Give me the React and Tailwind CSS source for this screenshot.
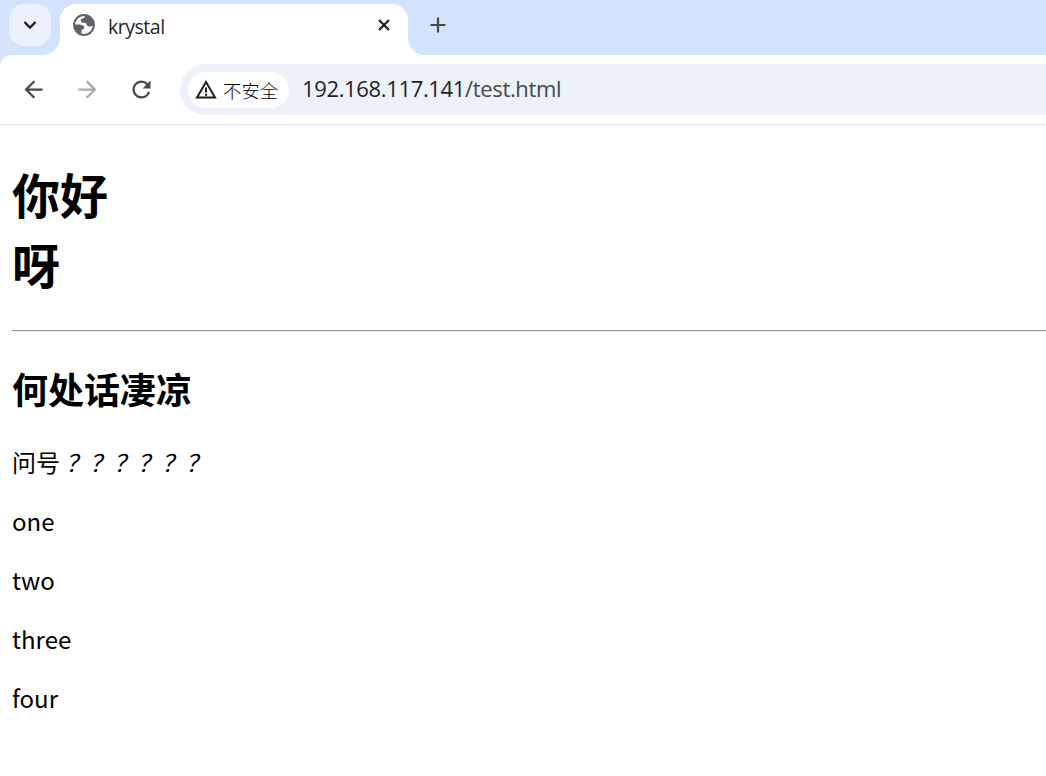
import { MdArrowBack, MdArrowForward, MdRefresh } from "react-icons/md";

const items = ["one", "two", "three", "four"];

function GlobeIcon() {
  return (
    <svg viewBox="0 0 24 24" className="mb-[2px] h-6 w-6">
      <circle cx="12" cy="12" r="9.9" fill="#fff" stroke="#5f6368" strokeWidth="2" />
      <path
        d="M13 2C13 4.4 12 5.2 10.4 5.6C8.8 6 8.4 7.4 9 8.8C9.6 10 11.4 9.6 13 9.8C14.6 10 14 12 15.6 13C17 13.8 19.6 13.4 22 12.4A10 10 0 0 0 13 2Z"
        fill="#5f6368"
      />
      <path
        d="M2 11.4H7.4C9.6 11.4 12 12.4 12.4 14.4C12.6 15.8 11.4 16.2 10 16.4C9.4 17.4 9.8 18.4 9.4 21.4A10 10 0 0 1 2 11.4Z"
        fill="#5f6368"
      />
    </svg>
  );
}

function TabStrip() {
  return (
    <div className="flex h-[55px] bg-[#d3e3fd]">
      <div className="flex w-[60px] flex-col justify-between">
        <button className="ml-[9px] mt-1 flex h-[42px] w-[42px] items-center justify-center rounded-[15px] bg-[#ebf2fe]">
          <svg viewBox="0 0 14 10" className="h-[10px] w-[14px]" fill="none" stroke="#1f1f1f" strokeWidth="2.3">
            <path d="M1.5 2L7 7.5L12.5 2" />
          </svg>
        </button>
        {/* curved foot joining the tab to the toolbar */}
        <svg viewBox="0 0 18 18" className="-mt-[9px] ml-[42px] h-[18px] w-[18px]">
          <path d="M18 0A18 18 0 0 1 0 18H18Z" fill="#fff" />
        </svg>
      </div>
      <div className="mt-1 flex w-[348px] items-center rounded-t-[16px] bg-white pb-2 pl-3 pr-[18px]">
        <GlobeIcon />
        <span className="ml-3 mt-[2px] grow text-[19.5px] leading-6 tracking-[-0.48px] text-[#1f1f1f]">krystal</span>
        <svg viewBox="0 0 12 12" className="mb-[2px] h-3 w-3" stroke="#1f1f1f" strokeWidth="2.2">
          <path d="M1 1L11 11M11 1L1 11" />
        </svg>
      </div>
      <svg viewBox="0 0 16 18" className="h-[18px] w-4 self-end">
        <path d="M0 0A16 18 0 0 0 16 18H0Z" fill="#fff" />
      </svg>
      <svg viewBox="0 0 16 16" className="ml-[6px] mt-[17px] h-4 w-4" stroke="#474747" strokeWidth="2.2">
        <path d="M8 0.5V15.5M0.5 8H15.5" />
      </svg>
    </div>
  );
}

function Toolbar() {
  return (
    <div className="bg-[#d3e3fd]">
      <div className="flex h-[70px] items-center rounded-tl-[12px] border-b border-[#dfe1e5] bg-white pl-[19.5px]">
        <MdArrowBack className="h-[27px] w-[27px] text-[#474747]" />
        <MdArrowForward className="ml-[27px] h-[27px] w-[27px] text-[#a8a8a8]" />
        <MdRefresh className="ml-[27px] h-[27px] w-[27px] text-[#474747]" />
        <div className="ml-[25.5px] flex h-[51px] grow items-center rounded-l-full bg-[#ecf1fa] pl-2">
          <div className="flex h-9 w-[101px] items-center rounded-full bg-white pl-[7px]">
            <svg viewBox="0 0 22 19" className="h-[19px] w-[22px]" fill="none" stroke="#1f1f1f" strokeWidth="2">
              <path d="M11 2L20 17.5H2Z" />
              <path d="M11 7.5V12.5M11 13.8V15.8" />
            </svg>
            <span className="ml-[6px] text-[18.4px] font-light leading-6 text-black [font-family:'Noto_Sans_CJK_SC',sans-serif]">
              不安全
            </span>
          </div>
          <span className="mb-1 ml-[13px] text-[22px] leading-8 tracking-[-0.35px] text-[#1f1f1f]">
            192.168.117.141<span className="text-[#474747]">/test.html</span>
          </span>
        </div>
      </div>
    </div>
  );
}

export default function App() {
  return (
    <div className="h-[776px] overflow-hidden bg-white [font-family:'Open_Sans','Noto_Sans_CJK_SC',sans-serif]">
      <TabStrip />
      <Toolbar />
      <main className="pl-3 pt-[33px] text-2xl text-black [font-family:'Noto_Sans_CJK_SC',sans-serif]">
        <h1 className="text-[48px] font-bold leading-[70px]">
          你好
          <br />
          呀
        </h1>
        <hr className="mt-8 h-[2px] border-b border-t border-b-[#eeeeee] border-t-[#9a9a9a]" />
        <h2 className="mt-[30px] text-[36px] font-bold leading-[52px]">何处话凄凉</h2>
        <p className="mt-[30px] leading-[35px]">
          问号 <em>？？？？？？</em>
        </p>
        {items.map((item) => (
          <p key={item} className="mt-6 leading-[35px]">
            {item}
          </p>
        ))}
      </main>
    </div>
  );
}
